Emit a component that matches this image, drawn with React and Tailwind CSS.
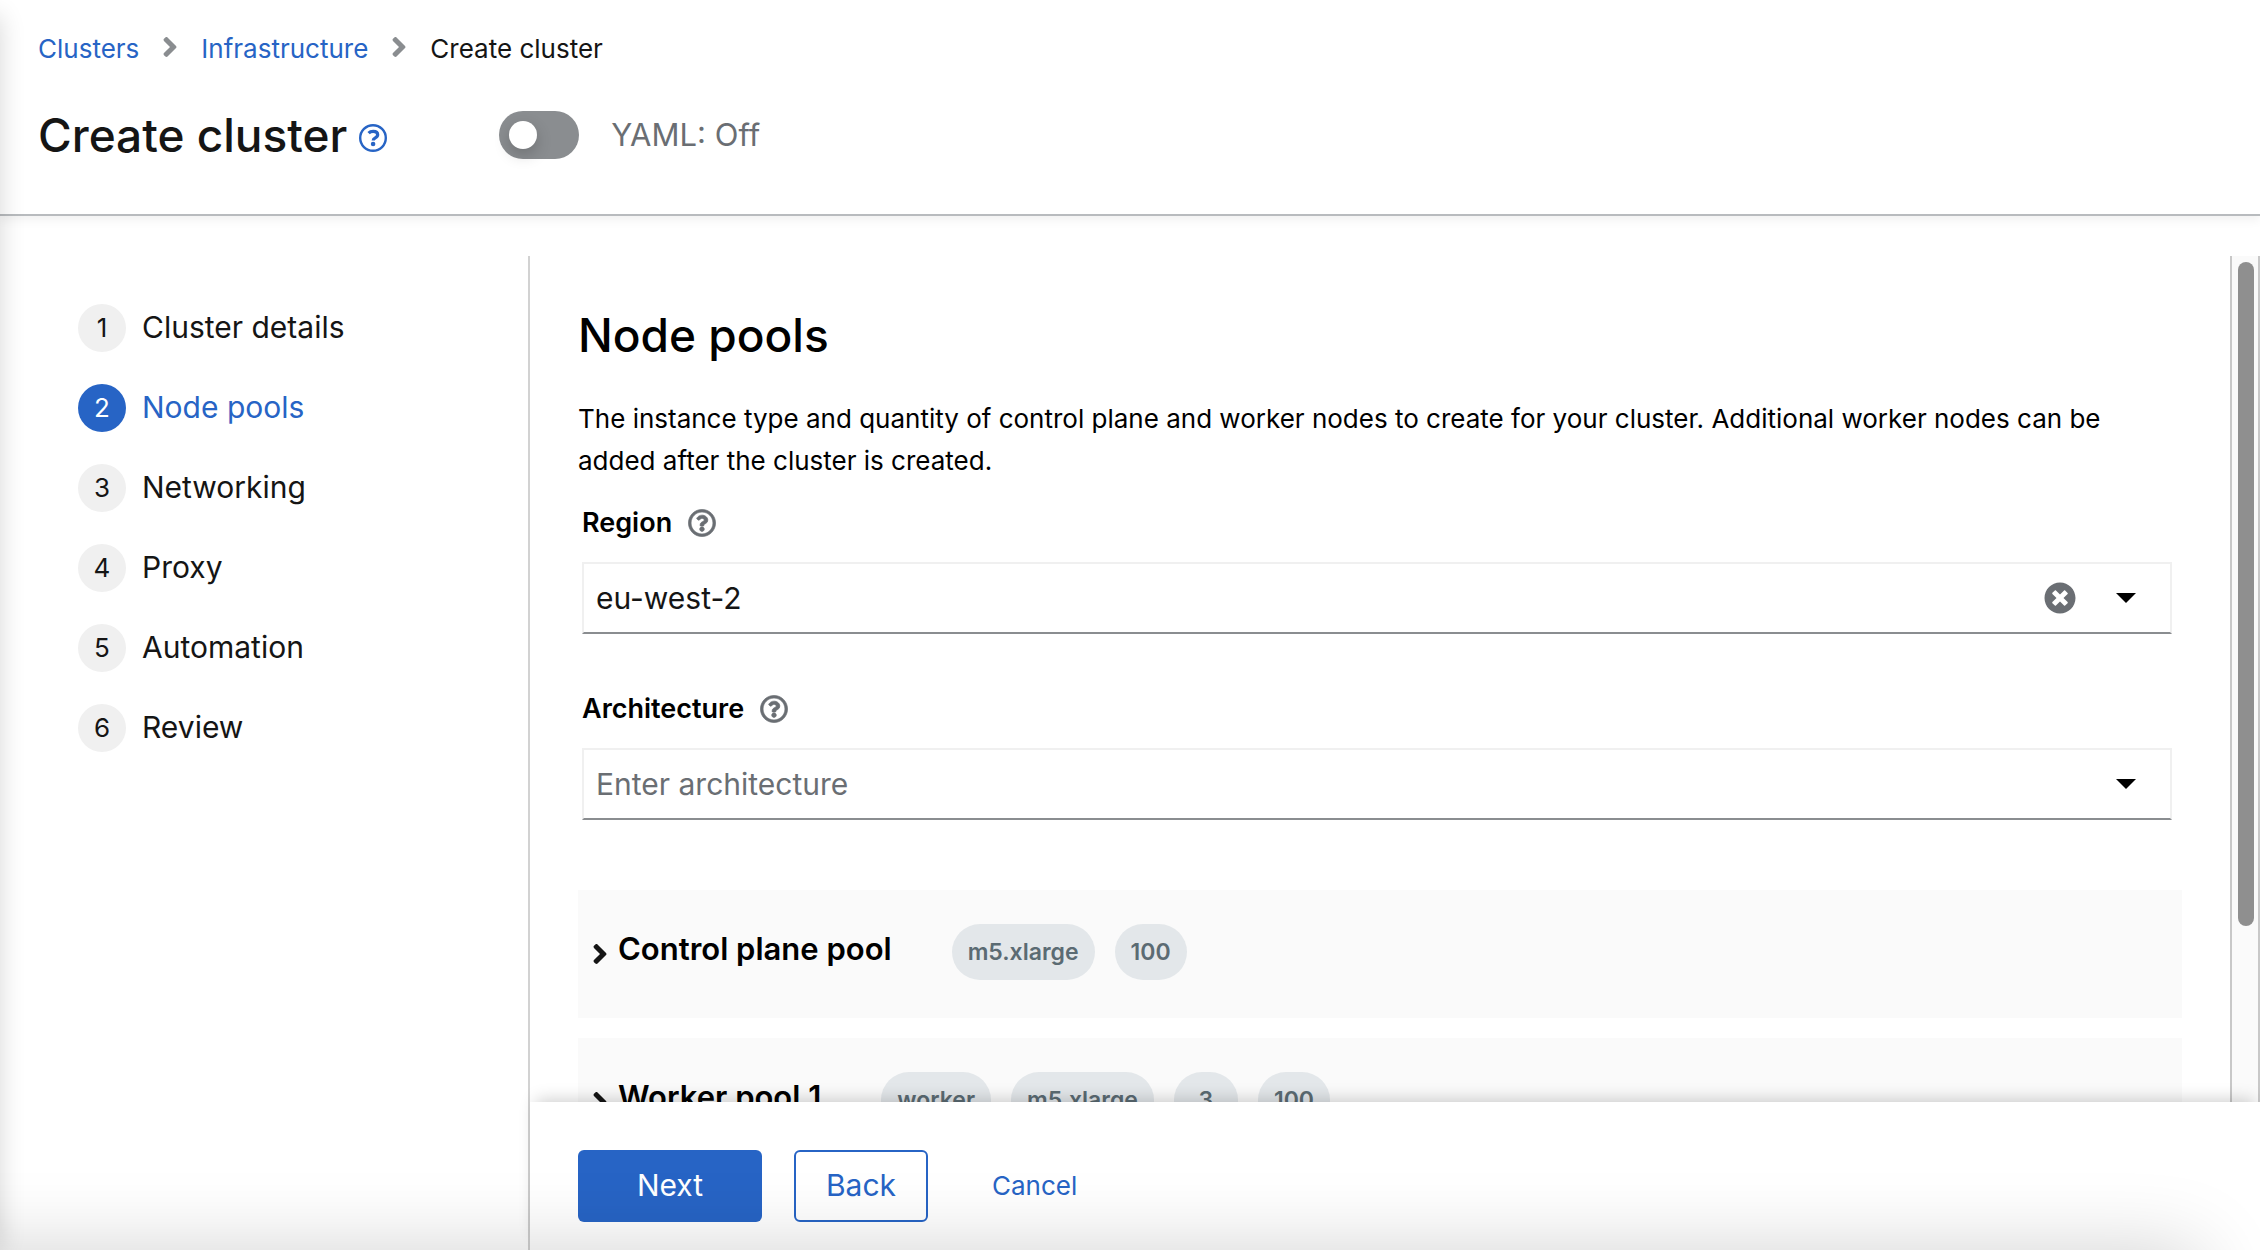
import React, { useState } from 'react';
import { FaAngleRight, FaRegQuestionCircle, FaTimesCircle } from 'react-icons/fa';

const steps = ['Cluster details', 'Node pools', 'Networking', 'Proxy', 'Automation', 'Review'];

const pools = [
  { name: 'Control plane pool', tags: ['m5.xlarge', '100'] },
  { name: 'Worker pool 1', tags: ['worker', 'm5.xlarge', '3', '100'] },
];

function TitleHelpIcon() {
  return (
    <svg viewBox="0 0 28 28" className="size-7" fill="none" aria-hidden="true">
      <circle cx="14" cy="14" r="12.8" stroke="currentColor" strokeWidth="2.4" />
      <path
        d="M9.6 9.2C10.7 8 12.3 7.4 14.2 7.4c2.7 0 4.5 1.3 4.5 3.3 0 1.5-.9 2.3-2.4 3.1-1.5.8-2.1 1.4-2.1 2.7"
        stroke="currentColor"
        strokeWidth="3.2"
      />
      <circle cx="14.1" cy="20" r="2.3" fill="currentColor" />
    </svg>
  );
}

function Breadcrumb() {
  return (
    <nav aria-label="Breadcrumb">
      <ol className="flex items-center gap-[23px] text-[26px] leading-[42px]">
        <li><a href="#clusters" className="text-[#2764c5]">Clusters</a></li>
        <li aria-hidden="true" className="pb-1 text-[#8a8d90]"><FaAngleRight className="h-8 w-4" /></li>
        <li><a href="#infrastructure" className="text-[#2764c5]">Infrastructure</a></li>
        <li aria-hidden="true" className="pb-1 text-[#8a8d90]"><FaAngleRight className="h-8 w-4" /></li>
        <li aria-current="page">Create cluster</li>
      </ol>
    </nav>
  );
}

function Header() {
  const [yaml, setYaml] = useState(false);
  return (
    <header className="flex flex-col gap-[33px] border-b-2 border-[#b8bbbe] px-[38px] pt-7 pb-[47px] shadow-[0_4px_10px_rgba(0,0,0,0.06)]">
      <Breadcrumb />
      <div className="flex items-center">
        <h1 className="text-[46px] leading-[64px] font-medium">Create cluster</h1>
        <button type="button" aria-label="About creating a cluster" className="ml-3 pt-1.5 text-[#2764c5]">
          <TitleHelpIcon />
        </button>
        <label className="ml-28 flex items-center gap-8 text-[31px] leading-[48px] text-[#6a6e73]">
          <input
            type="checkbox"
            role="switch"
            checked={yaml}
            onChange={() => setYaml(!yaml)}
            className="h-12 w-20 appearance-none rounded-full bg-[#8a8d90] p-2.5 before:block before:size-7 before:rounded-full before:bg-white before:shadow-[0_6px_16px_rgba(0,0,0,0.2)] checked:bg-[#2764c5] checked:before:ml-8"
          />
          YAML: {yaml ? 'On' : 'Off'}
        </label>
      </div>
    </header>
  );
}

function Sidebar({ current }) {
  return (
    <nav aria-label="Wizard steps" className="w-[530px] shrink-0 border-r-2 border-[#d2d2d2] pt-12 pl-[78px]">
      <ol className="flex flex-col gap-8">
        {steps.map((step, i) => (
          <li key={step}>
            <button type="button" className="flex h-12 items-center gap-4 text-[30px] leading-[46px]">
              <span
                className={
                  i === current
                    ? 'flex size-12 items-center justify-center rounded-full bg-[#2764c5] text-[26px] text-white'
                    : 'flex size-12 items-center justify-center rounded-full bg-[#f0f0f0] text-[26px]'
                }
              >
                {i + 1}
              </span>
              <span className={i === current ? 'pb-0.5 text-[#2764c5]' : 'pb-0.5'}>{step}</span>
            </button>
          </li>
        ))}
      </ol>
    </nav>
  );
}

function SelectField({ id, label, placeholder, initial }) {
  const [value, setValue] = useState(initial);
  return (
    <div className="flex flex-col gap-[18px] pr-2.5 pl-1">
      <div className="flex items-center gap-4 text-[27px] leading-[42px] font-semibold text-black">
        <label htmlFor={id}>{label}</label>
        <button type="button" aria-label={'Help for ' + label} className="text-[#6a6e73]">
          <FaRegQuestionCircle className="size-7 stroke-current stroke-[12px]" />
        </button>
      </div>
      <div className="flex h-[72px] items-center gap-10 border-2 border-[#f0f0f0] border-b-[#8a8d90] pr-[34px] pl-3">
        <input
          id={id}
          type="text"
          value={value}
          placeholder={placeholder}
          onChange={(e) => setValue(e.target.value)}
          className="min-w-0 flex-1 text-[30px] leading-[48px] outline-none placeholder:text-[#6a6e73]"
        />
        {value && (
          <button type="button" aria-label={'Clear ' + label} onClick={() => setValue('')} className="text-[#6a6e73]">
            <FaTimesCircle className="size-8" />
          </button>
        )}
        <button type="button" aria-label={'Show options for ' + label} className="text-black">
          <svg viewBox="0 0 20 10" className="h-2.5 w-5" fill="currentColor" aria-hidden="true">
            <path d="M0 0h20L10 10z" />
          </svg>
        </button>
      </div>
    </div>
  );
}

function PoolPanel({ pool }) {
  return (
    <section className="flex h-32 shrink-0 items-start gap-[60px] bg-[#fafafa] pt-[34px] pl-3.5">
      <button type="button" aria-expanded="false" className="flex h-14 items-center gap-2.5">
        <FaAngleRight className="mt-1 h-8 w-4" />
        <span className="pb-1.5 text-[31px] leading-[48px] font-semibold text-black">{pool.name}</span>
      </button>
      <ul className="flex gap-5">
        {pool.tags.map((tag) => (
          <li key={tag} className="flex h-14 min-w-16 items-center justify-center rounded-full bg-[#e3e7ea] px-4 text-[23px] leading-8 font-semibold text-[#5b6b73]">
            {tag}
          </li>
        ))}
      </ul>
    </section>
  );
}

function Footer() {
  return (
    <footer className="flex items-center bg-white px-12 pt-12 pb-7 shadow-[0_-8px_16px_-6px_rgba(0,0,0,0.2)]">
      <button type="button" className="h-[72px] w-[184px] rounded-md bg-[#2764c5] pb-0.5 text-[30px] text-white">Next</button>
      <button type="button" className="ml-8 h-[72px] w-[134px] rounded-md border-2 border-[#2764c5] pb-0.5 text-[30px] text-[#2764c5]">Back</button>
      <button type="button" className="ml-16 pb-0.5 text-[26px] text-[#2764c5]">Cancel</button>
    </footer>
  );
}

export default function App() {
  return (
    <div className="relative flex h-screen flex-col overflow-hidden bg-white font-['Inter','Red_Hat_Text',sans-serif] text-[#151515]">
      <Header />
      <div className="flex min-h-0 flex-1 pt-10">
        <Sidebar current={1} />
        <div className="flex min-w-0 flex-1 flex-col">
          <div className="flex min-h-0 flex-1 overflow-hidden">
            <main className="flex min-w-0 flex-1 flex-col px-12 pt-[50px]">
              <h2 className="text-[46px] leading-[58px] font-medium text-black">Node pools</h2>
              <p className="mt-[34px] text-[26px] leading-[42px] text-black">
                The instance type and quantity of control plane and worker nodes to create for your cluster. Additional
                worker nodes can be added after the cluster is created.
              </p>
              <form className="mt-5 flex flex-col gap-[54px]">
                <SelectField id="region" label="Region" initial="eu-west-2" />
                <SelectField id="architecture" label="Architecture" placeholder="Enter architecture" initial="" />
              </form>
              <div className="mt-[70px] flex flex-col gap-5">
                {pools.map((pool) => (
                  <PoolPanel key={pool.name} pool={pool} />
                ))}
              </div>
            </main>
            <div aria-hidden="true" className="w-[30px] shrink-0 border-x-2 border-[#c8c8c8] bg-[#fafafa] px-1.5 pt-1.5">
              <div className="h-[79%] w-4 rounded-full bg-[#8f8f8f]" />
            </div>
          </div>
          <Footer />
        </div>
      </div>
      <div aria-hidden="true" className="pointer-events-none absolute top-4 right-full bottom-0 w-20 shadow-[0_0_24px_rgba(0,0,0,0.16)]" />
      <div aria-hidden="true" className="pointer-events-none absolute top-full right-[60px] -left-40 h-60 shadow-[0_0_80px_rgba(0,0,0,0.18)]" />
    </div>
  );
}
